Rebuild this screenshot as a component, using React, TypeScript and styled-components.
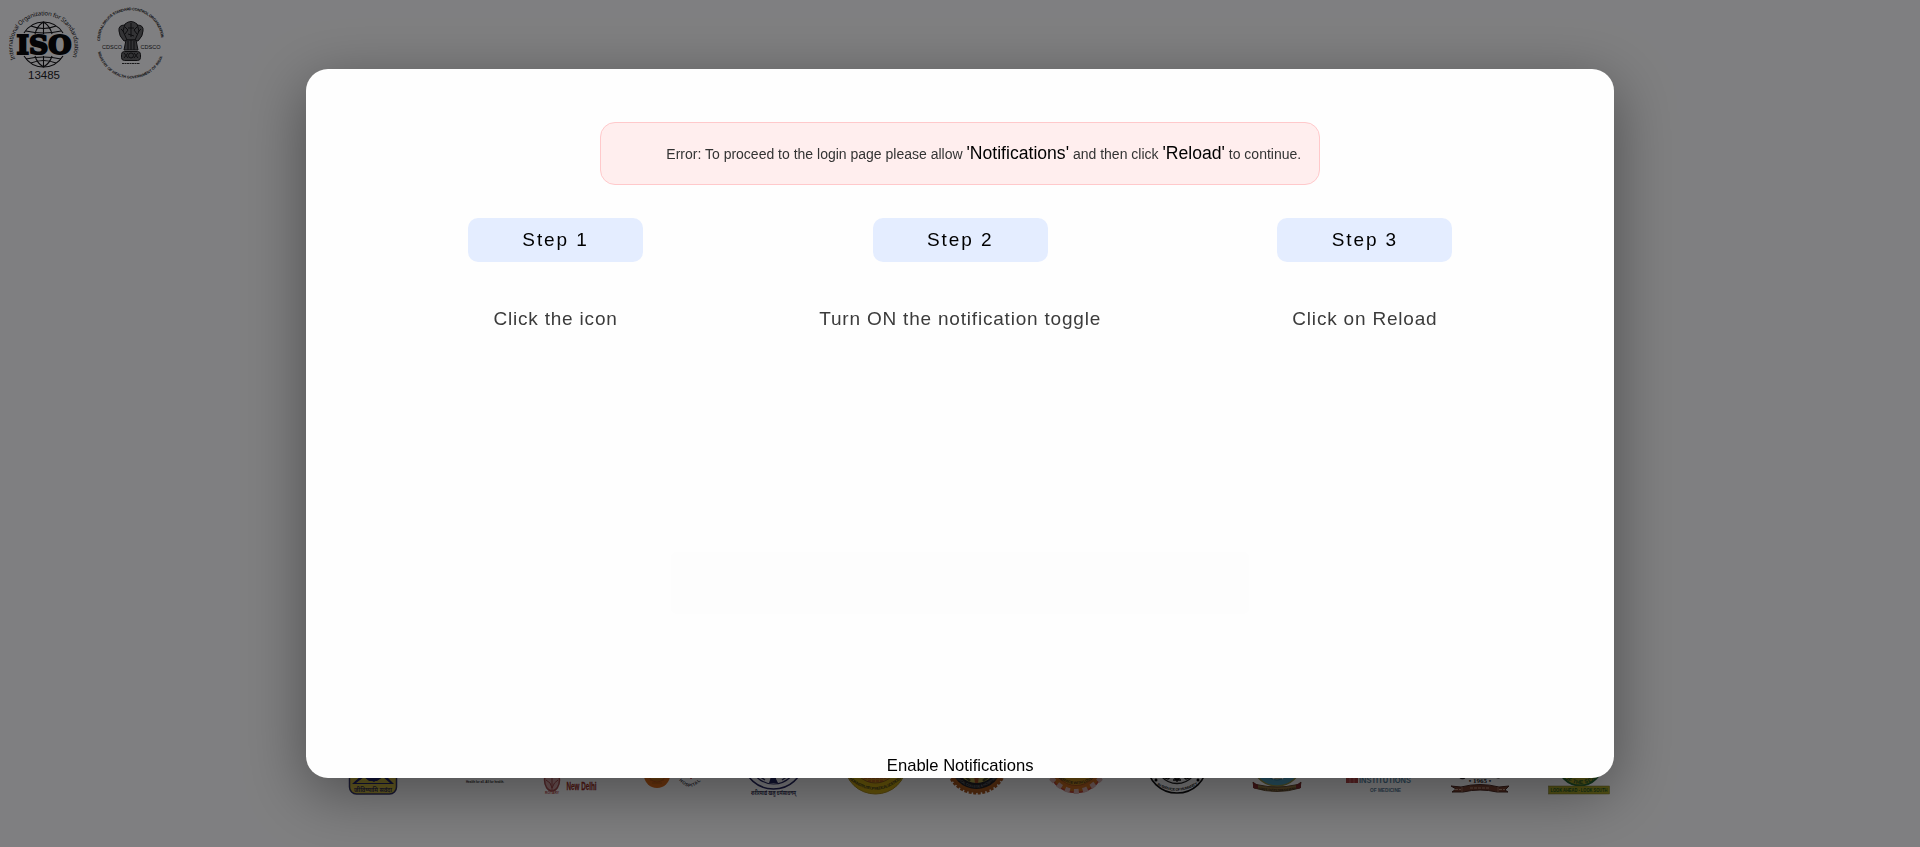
import React from "react";
import styled, { createGlobalStyle } from "styled-components";

const GlobalStyle = createGlobalStyle`
  * { box-sizing: border-box; }
  body {
    margin: 0;
    overflow: hidden;
    background: #fffeff;
    font-family: "Liberation Sans", Arial, sans-serif;
  }
`;

const Page = styled.div`
  height: 100vh;
  display: flex;
  flex-direction: column;
  justify-content: space-between;
`;

const Certifications = styled.header`
  display: flex;
  height: 90px;
`;

const Partners = styled.footer`
  display: grid;
  grid-template-columns: repeat(13, 1fr);
  width: 1308px;
  margin: 0 0 49px 323px;
`;

const PartnerLogo = styled.svg`
  display: block;
  width: 100%;
  height: 60px;
  overflow: visible;
`;

const Backdrop = styled.div`
  position: fixed;
  inset: 0;
  display: flex;
  align-items: flex-start;
  justify-content: center;
  padding-top: 69px;
  background: rgba(0, 0, 4, 0.5);
`;

const Modal = styled.section`
  display: flex;
  flex-direction: column;
  align-items: center;
  width: 1308px;
  height: 709px;
  padding: 53px 46.8px 0 47.2px;
  border-radius: 22px;
  background: #fefefe;
  box-shadow: 0 15px 60px rgba(0, 0, 0, 0.4);
`;

const Alert = styled.div`
  display: flex;
  align-items: center;
  justify-content: flex-end;
  width: 720px;
  height: 63px;
  padding-right: 18px;
  border: 1px solid #ffc9cb;
  border-radius: 15px;
  background: #ffeeee;
`;

const AlertText = styled.p`
  margin: 0;
  font-size: 14px;
  line-height: 24px;
  color: #333;
  white-space: nowrap;
`;

const Emphasis = styled.span`
  font-size: 17.6px;
  color: #000;
`;

const Steps = styled.div`
  display: grid;
  grid-template-columns: repeat(3, 1fr);
  width: 100%;
  margin-top: 33px;
`;

const Step = styled.div`
  display: flex;
  flex-direction: column;
  align-items: center;
`;

const StepBadge = styled.div`
  width: 175px;
  height: 44px;
  border-radius: 10px;
  background: #e4edff;
  font-size: 19px;
  line-height: 43px;
  letter-spacing: 1.9px;
  text-align: center;
  color: #000;
`;

const StepText = styled.p`
  margin: 46px 0 0;
  font-size: 19px;
  line-height: 22px;
  letter-spacing: 0.8px;
  color: #3b3b3b;
`;

const LoginPlate = styled.div`
  width: 578px;
  height: 62px;
  margin-top: 222px;
  border-radius: 5px;
  background: #fdfdfd;
`;

const EnableButton = styled.button`
  margin: auto 0 2px;
  padding: 0;
  border: 0;
  background: none;
  font-family: inherit;
  font-size: 16.6px;
  line-height: 21px;
  color: #000;
`;

const steps = [
  { title: "Step 1", text: "Click the icon" },
  { title: "Step 2", text: "Turn ON the notification toggle" },
  { title: "Step 3", text: "Click on Reload" },
];

const serif = "Liberation Serif, serif";
const sans = "Liberation Sans, sans-serif";

function IsoLogo() {
  return (
    <svg width="88" height="90" viewBox="0 0 88 90">
      <path id="iso-arc" d="M15.2 59A31 31 0 1 1 71.8 59" fill="none" />
      <text fontFamily="Noto Sans, sans-serif" fontSize="6.1" fill="#161616">
        <textPath href="#iso-arc" textLength="121">International Organization for Standardization</textPath>
      </text>
      <g fill="none" stroke="#111" strokeWidth="1.1">
        <path d="M24 33Q31 22 43.5 22T63 33M24 56Q31 67 43.5 67T63 56" />
        <path d="M43.5 22V34M43.5 56V67M35 34Q37 26 43.5 22Q50 26 52 34M35 56Q37 63 43.5 67Q50 63 52 56" />
        <path d="M31 26Q43.5 31 56 26M26 31Q43.5 35 61 31M31 63Q43.5 58 56 63M26 59Q43.5 55 61 59" />
      </g>
      <text x="16.5" y="54" textLength="55" lengthAdjust="spacingAndGlyphs" fontFamily="DejaVu Serif, serif" fontWeight="700" fontSize="26.5" fill="#080808" stroke="#080808" strokeWidth="2">ISO</text>
      <text x="28" y="79" textLength="32" lengthAdjust="spacingAndGlyphs" fontFamily={sans} fontSize="10" fill="#222">13485</text>
    </svg>
  );
}

function CdscoLogo() {
  return (
    <svg width="88" height="90" viewBox="88 0 88 90">
      <path id="cdsco-top" d="M100 41A30.7 30.7 0 0 1 161.4 41" fill="none" />
      <path id="cdsco-bottom" d="M98 52A33.8 33.8 0 0 0 164 52" fill="none" />
      <g fontFamily={sans} fontWeight="700" fontSize="3.8" fill="#222">
        <text><textPath href="#cdsco-top" textLength="93">CENTRAL DRUGS STANDARD CONTROL ORGANIZATION</textPath></text>
        <text><textPath href="#cdsco-bottom" textLength="86">MINISTRY OF HEALTH GOVERNMENT OF INDIA</textPath></text>
      </g>
      <g fontFamily={sans} fontSize="6" fill="#222">
        <text x="102" y="49" textLength="20" lengthAdjust="spacingAndGlyphs">CDSCO</text>
        <text x="140.5" y="49" textLength="20" lengthAdjust="spacingAndGlyphs">CDSCO</text>
      </g>
      <g fill="#666" stroke="#1d1d1d" strokeWidth="1">
        <path d="M125 25Q118 25 119 31Q119 36 124 41L129 40ZM137 25Q144 25 143 31Q143 36 138 41L133 40Z" />
        <path d="M125 24Q131 19 137 24L139 31L135 40H127L123 31Z" />
        <path d="M126 40L124 50H138L136 40ZM128 41V50M131 40V50M134 41V50" />
        <rect x="121.5" y="51.5" width="19" height="9" rx="3" />
        <path d="M124 53L128 58M128 53L124 58M134 53L138 58M138 53L134 58" />
        <circle cx="131" cy="55.5" r="2.5" />
      </g>
      <path d="M125 27L128 30L125 34M137 27L134 30L137 34M131 23V37M128 28H134M128 34L134 36M121 29L124 32M141 29L138 32" stroke="#1a1a1a" fill="none" />
      <path d="M122 63.5H140" stroke="#333" strokeWidth="1" strokeDasharray="2 .5" />
    </svg>
  );
}

const logos = [
  <g key="shield">
    <rect x="26.5" y="18" width="47" height="38" rx="7" fill="#c9b540" stroke="#343464" strokeWidth="1.5" />
    <path d="M29 46L39 37H62L71 46Z" fill="#202368" />
    <path d="M33 45L41 39L46 43H54L60 39L67 45Z" fill="#c4b43f" />
    <path d="M41 38H59L51 44Z" fill="#202368" />
    <text x="31" y="54" textLength="38" lengthAdjust="spacingAndGlyphs" fontFamily="Noto Sans, sans-serif" fontWeight="700" fontSize="5.6" fill="#3a3650">जीविष्यामि सर्वदा</text>
  </g>,
  <g key="health">
    <text x="42" y="44.5" textLength="38" lengthAdjust="spacingAndGlyphs" fontFamily={sans} fontWeight="700" fontSize="4" fill="#252525">Health for all. All for health.</text>
  </g>,
  <g key="delhi">
    <ellipse cx="28" cy="42" rx="7.5" ry="11" fill="#d9a8a8" stroke="#a85050" strokeWidth="1.5" />
    <path d="M28 34V52M22 42Q27 44 28 50Q30 44 34 42" fill="none" stroke="#a34848" />
    <text x="21" y="56" textLength="14" lengthAdjust="spacingAndGlyphs" fontFamily={sans} fontWeight="700" fontSize="3.5" fill="#b54949">ROTARY</text>
    <text x="42.5" y="51.5" textLength="30" lengthAdjust="spacingAndGlyphs" fontFamily={sans} fontWeight="700" fontSize="11.5" fill="#9c2f24" stroke="#9c2f24" strokeWidth=".3">New Delhi</text>
  </g>,
  <g key="hospital">
    <circle cx="32" cy="37" r="13" fill="#dd6c18" />
    <circle cx="32" cy="35" r="9" fill="#d3801f" stroke="#c4521b" />
    <path d="M25 42H39M27 45H37" stroke="#b96013" />
    <path d="M66 38V41" stroke="#c44" strokeWidth="1.5" />
    <path id="hospital-arc" d="M54 42Q65 56 77 41" fill="none" />
    <text fontFamily={sans} fontWeight="700" fontSize="4.4" fill="#363642"><textPath href="#hospital-arc" textLength="26">HOSPITAL</textPath></text>
  </g>,
  <g key="aiims">
    <ellipse cx="48.5" cy="25" rx="29" ry="26" fill="#f6f6fa" stroke="#25265e" strokeWidth="1.5" />
    <ellipse cx="48.5" cy="22" rx="24" ry="24" fill="none" stroke="#25265e" strokeWidth="1.2" />
    <path d="M46 38H51V41L53 45H44L45 42Z" fill="#20245c" />
    <path d="M34 38L40 42M57 42L63 38" stroke="#34385f" strokeWidth="1.5" />
    <text x="26" y="57" textLength="45" lengthAdjust="spacingAndGlyphs" fontFamily="Noto Sans, sans-serif" fontWeight="700" fontSize="5.5" fill="#30304e">शरीरमाद्यं खलु धर्मसाधनम्</text>
  </g>,
  <g key="medical">
    <ellipse cx="49.5" cy="27" rx="30.5" ry="29" fill="#cba811" stroke="#a98a19" />
    <ellipse cx="49.5" cy="22" rx="23" ry="23" fill="#cf901a" stroke="#94601c" strokeWidth="1" />
    <path d="M38 40H60M42 43H57" stroke="#b24621" strokeWidth="1.1" strokeDasharray="3 1" />
    <path id="medical-arc" d="M23 41Q49 63 76 40" fill="none" />
    <text fontFamily={sans} fontWeight="700" fontSize="4" fill="#4e4920"><textPath href="#medical-arc" textLength="58">INDIA INSTITUTE OF MEDICAL SCIENCES</textPath></text>
  </g>,
  <g key="gear">
    <ellipse cx="49.5" cy="27" rx="29" ry="28" fill="#ad5c1c" stroke="#a8551b" strokeWidth="3" strokeDasharray="3 1.5" />
    <ellipse cx="49.5" cy="25" rx="26" ry="26" fill="#232326" />
    <ellipse cx="49.5" cy="22" rx="22" ry="23" fill="#bcae4e" />
    <path d="M38 38L43 43M56 43L62 38" stroke="#494725" strokeWidth="2.5" />
    <path d="M47 38H52L51 45H48Z" fill="#a34a20" />
    <path id="gear-arc" d="M27 38Q49 61 72 38" fill="none" />
    <text fontFamily={sans} fontSize="3.3" fill="#999"><textPath href="#gear-arc" textLength="49">MEDICAL COLLEGE &amp; HOSPITAL</textPath></text>
  </g>,
  <g key="service">
    <ellipse cx="49" cy="26" rx="28.5" ry="28.5" fill="#cf7020" stroke="#c54634" strokeWidth="1.5" />
    <path d="M24 40Q49 67 74 40" fill="none" stroke="#dcb5b2" strokeWidth="5" strokeDasharray="5 4" />
    <ellipse cx="49" cy="22" rx="24" ry="25.5" fill="#cf951f" stroke="#ad5420" />
    <path d="M47 38H51V40H47Z" fill="#fff" />
    <path id="service-arc" d="M31 40Q49 52 67 40" fill="none" />
    <text fontFamily={sans} fontWeight="700" fontSize="3.8" fill="#4c3420"><textPath href="#service-arc" textLength="37">SERVICE WITH LOVE</textPath></text>
  </g>,
  <g key="humanity">
    <ellipse cx="49" cy="27" rx="29.5" ry="28" fill="#f1f1f1" stroke="#111" strokeWidth="1.6" />
    <ellipse cx="49" cy="22" rx="22" ry="23.5" fill="#eaeaea" stroke="#222" strokeWidth="1.4" />
    <path d="M34 39L40 41L44 38L49 42L54 38L58 41L64 39M49 38V44M45 42H53" fill="none" stroke="#111" strokeWidth="1.3" />
    <circle cx="28" cy="42" r="1.5" /><circle cx="70" cy="42" r="1.5" />
    <path id="humanity-arc" d="M29 47Q49 59 70 46" fill="none" />
    <text fontFamily={sans} fontWeight="700" fontSize="3.8" fill="#181818"><textPath href="#humanity-arc" textLength="43">IN SERVICE OF HUMANITY</textPath></text>
  </g>,
  <g key="blue-seal">
    <ellipse cx="48" cy="26" rx="24" ry="22" fill="#4f9fbe" stroke="#969345" strokeWidth="1.5" />
    <ellipse cx="48" cy="20" rx="17" ry="22" fill="#b5baa4" stroke="#297e9d" />
    <path d="M43 38L45 41M52 38L54 41" stroke="#eee" strokeWidth="1.5" />
    <path d="M24 44Q26 47 30 47Q48 51 66 47Q70 47 72 44L71 50Q48 57 25 50Z" fill="#957840" stroke="#634d30" />
    <path d="M24 44L29 47V51L24 50ZM72 44L67 47V51L72 50Z" fill="#802c2c" />
    <path id="seal-arc" d="M29 51Q48 55 67 51" fill="none" />
    <text fontFamily={serif} fontWeight="700" fontSize="3" fill="#2e2720"><textPath href="#seal-arc" textLength="38">SARVE SANTU NIRAMAYAH</textPath></text>
  </g>,
  <g key="blue-wordmark">
    <path d="M17 38H29V45H17Z" fill="#b24444" />
    <path d="M21 40V45M25 40V45" stroke="#cf7979" />
    <text x="30" y="44.5" textLength="52" lengthAdjust="spacingAndGlyphs" fontFamily={sans} fontWeight="700" fontSize="9" fill="#5887a2">INSTITUTIONS</text>
    <text x="41" y="54" textLength="31" lengthAdjust="spacingAndGlyphs" fontFamily={sans} fontWeight="700" fontSize="6" fill="#54788f">OF MEDICINE</text>
  </g>,
  <g key="founded">
    <path d="M28 38Q33 43 36 38M65 38Q68 42 73 37" fill="none" stroke="#26211f" strokeWidth="1.5" />
    <text x="50" y="45" textAnchor="middle" fontFamily={serif} fontWeight="700" fontSize="7" fill="#252525">• 1965 •</text>
    <path d="M21 48L31 49Q50 44 69 49L79 48L75 52L78 54L67 54Q50 50 33 54L22 54L26 51Z" fill="#7c4431" stroke="#4a2920" />
    <path d="M32 49V54M68 49V54" stroke="#a47760" />
    <path d="M25 51.5H31M40 50H60M69 51.5H75" stroke="#c49c86" strokeWidth="1.2" strokeDasharray="3 1" />
  </g>,
  <g key="south">
    <circle cx="50" cy="25" r="22.5" fill="#aaa329" stroke="#266834" strokeWidth="2" />
    <circle cx="50" cy="21" r="18" fill="#b8af30" stroke="#28783a" strokeWidth="1.5" />
    <path id="south-arc" d="M31 38Q50 54 69 38" fill="none" />
    <text fontFamily={sans} fontWeight="700" fontSize="5.4" fill="#205928"><textPath href="#south-arc" textLength="41">• OF THE SEA •</textPath></text>
    <rect x="18.5" y="48" width="61" height="8" fill="#aaa427" stroke="#73742b" strokeWidth=".5" />
    <text x="20.5" y="54" textLength="57" lengthAdjust="spacingAndGlyphs" fontFamily={sans} fontWeight="700" fontSize="5.2" fill="#205928">LOOK AHEAD - LOOK SOUTH</text>
  </g>,
];

export default function App() {
  return (
    <>
      <GlobalStyle />
      <Page>
        <Certifications>
          <IsoLogo />
          <CdscoLogo />
        </Certifications>
        <Partners>
          {logos.map((logo) => (
            <PartnerLogo key={logo.key} viewBox="0 0 100.6 60">{logo}</PartnerLogo>
          ))}
        </Partners>
      </Page>
      <Backdrop>
        <Modal role="dialog">
          <Alert role="alert">
            <AlertText>
              Error: To proceed to the login page please allow <Emphasis>'Notifications'</Emphasis> and then click{" "}
              <Emphasis>'Reload'</Emphasis> to continue.
            </AlertText>
          </Alert>
          <Steps>
            {steps.map((step) => (
              <Step key={step.title}>
                <StepBadge>{step.title}</StepBadge>
                <StepText>{step.text}</StepText>
              </Step>
            ))}
          </Steps>
          <LoginPlate />
          <EnableButton>Enable Notifications</EnableButton>
        </Modal>
      </Backdrop>
    </>
  );
}
